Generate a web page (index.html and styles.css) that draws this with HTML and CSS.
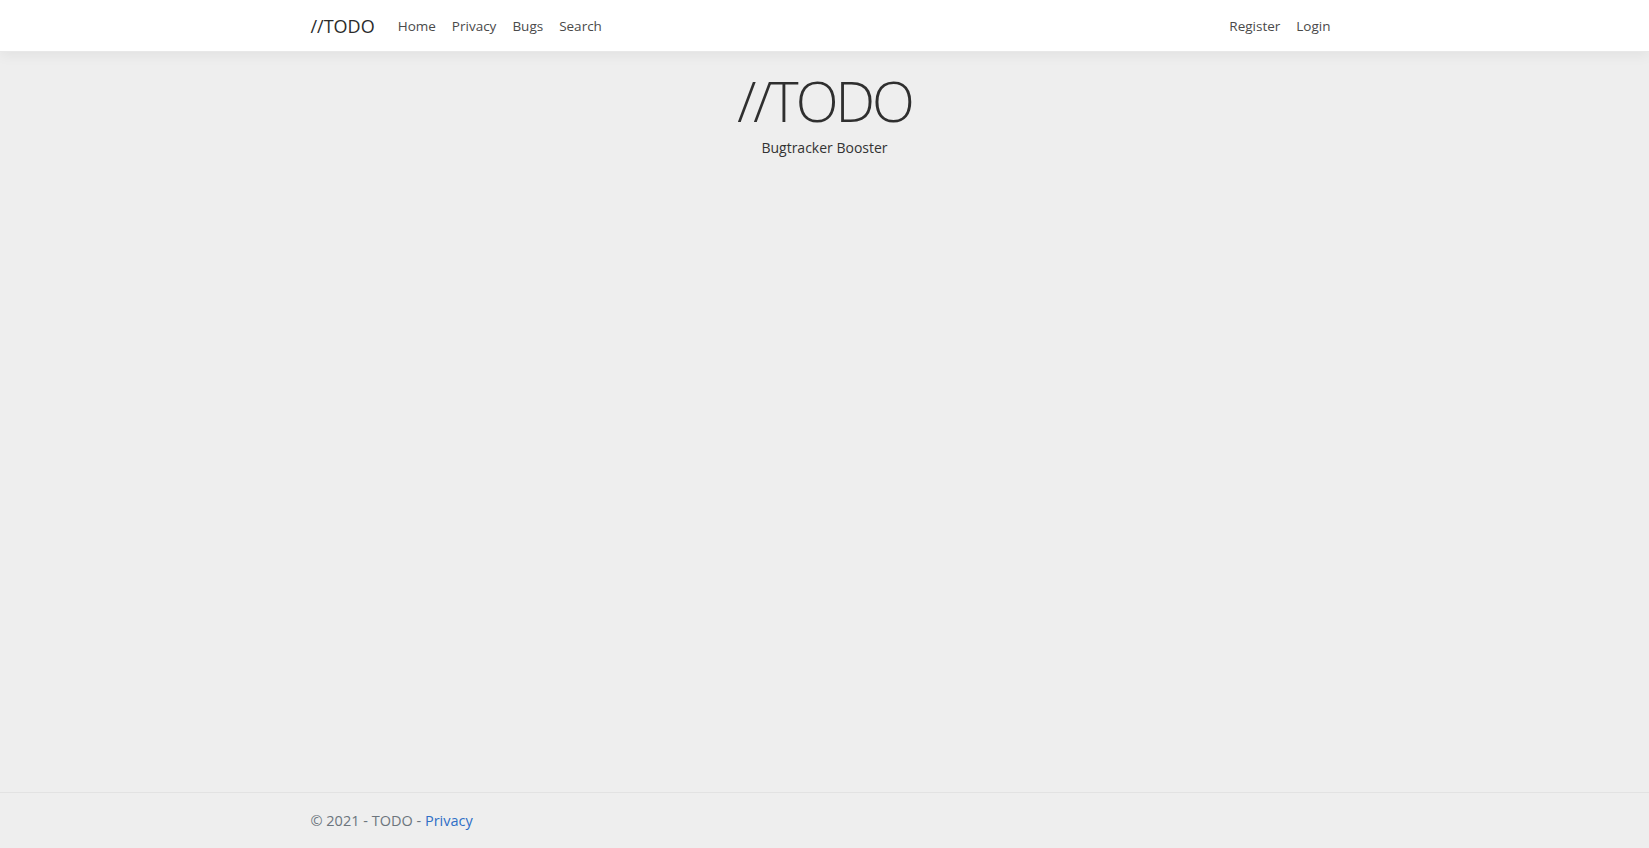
FILE: index.html
```html
<!DOCTYPE html>
<html lang="en">
<head>
<meta charset="utf-8">
<title>//TODO</title>
<link rel="stylesheet" href="styles.css">
</head>
<body>
<header class="navbar">
  <div class="container nav-inner">
    <a class="brand" href="#">//TODO</a>
    <ul class="nav nav-main">
      <li><a class="nav-link" href="#">Home</a></li>
      <li><a class="nav-link" href="#">Privacy</a></li>
      <li><a class="nav-link" href="#">Bugs</a></li>
      <li><a class="nav-link" href="#">Search</a></li>
    </ul>
    <ul class="nav nav-user">
      <li><a class="nav-link" href="#">Register</a></li>
      <li><a class="nav-link" href="#">Login</a></li>
    </ul>
  </div>
</header>
<main class="main">
  <div class="hero">
    <h1 class="hero-title">//TODO</h1>
    <p class="hero-sub">Bugtracker Booster</p>
  </div>
</main>
<footer class="footer">
  <div class="container">&copy; 2021 - TODO - <a class="footer-link" href="#">Privacy</a></div>
</footer>
</body>
</html>
```
FILE: styles.css
```css
* { box-sizing: border-box; }
html, body { height: 100%; }
body {
  margin: 0;
  min-height: 100vh;
  display: flex;
  flex-direction: column;
  background: #eeeeee;
  color: #212529;
  font-family: "Open Sans", "Noto Sans", sans-serif;
  font-size: 14px;
}
a { text-decoration: none; }
.container {
  width: 1028px;
  margin: 0 auto;
}
.navbar {
  height: 52px;
  background: #ffffff;
  border-bottom: 1px solid #e8e8e8;
  box-shadow: 0 4px 12px rgba(0, 0, 0, 0.05);
  flex-shrink: 0;
}
.nav-inner {
  height: 100%;
  display: flex;
  align-items: center;
}
.brand {
  font-size: 18px;
  color: #2b2b2b;
  margin-right: 15px;
}
.nav {
  list-style: none;
  margin: 0;
  padding: 0;
  display: flex;
}
.nav-main { flex: 1; }
.nav-link {
  display: block;
  padding: 0 8px;
  font-size: 13.5px;
  color: #4a4a4a;
}
.main {
  flex: 1;
}
.hero {
  text-align: center;
  padding-top: 15px;
}
.hero-title {
  margin: 0;
  font-size: 56px;
  font-weight: 300;
  line-height: 1.2;
  color: #2f2f2f;
  letter-spacing: -3px;
}
.hero-sub {
  margin: 3px 0 0;
  font-size: 14px;
  line-height: 1.5;
  color: #333333;
}
.footer {
  height: 56px;
  border-top: 1px solid #e2e2e2;
  display: flex;
  align-items: center;
  font-size: 14.5px;
  color: #6c757d;
  flex-shrink: 0;
}
.footer-link { color: #2f6fc6; }
```
